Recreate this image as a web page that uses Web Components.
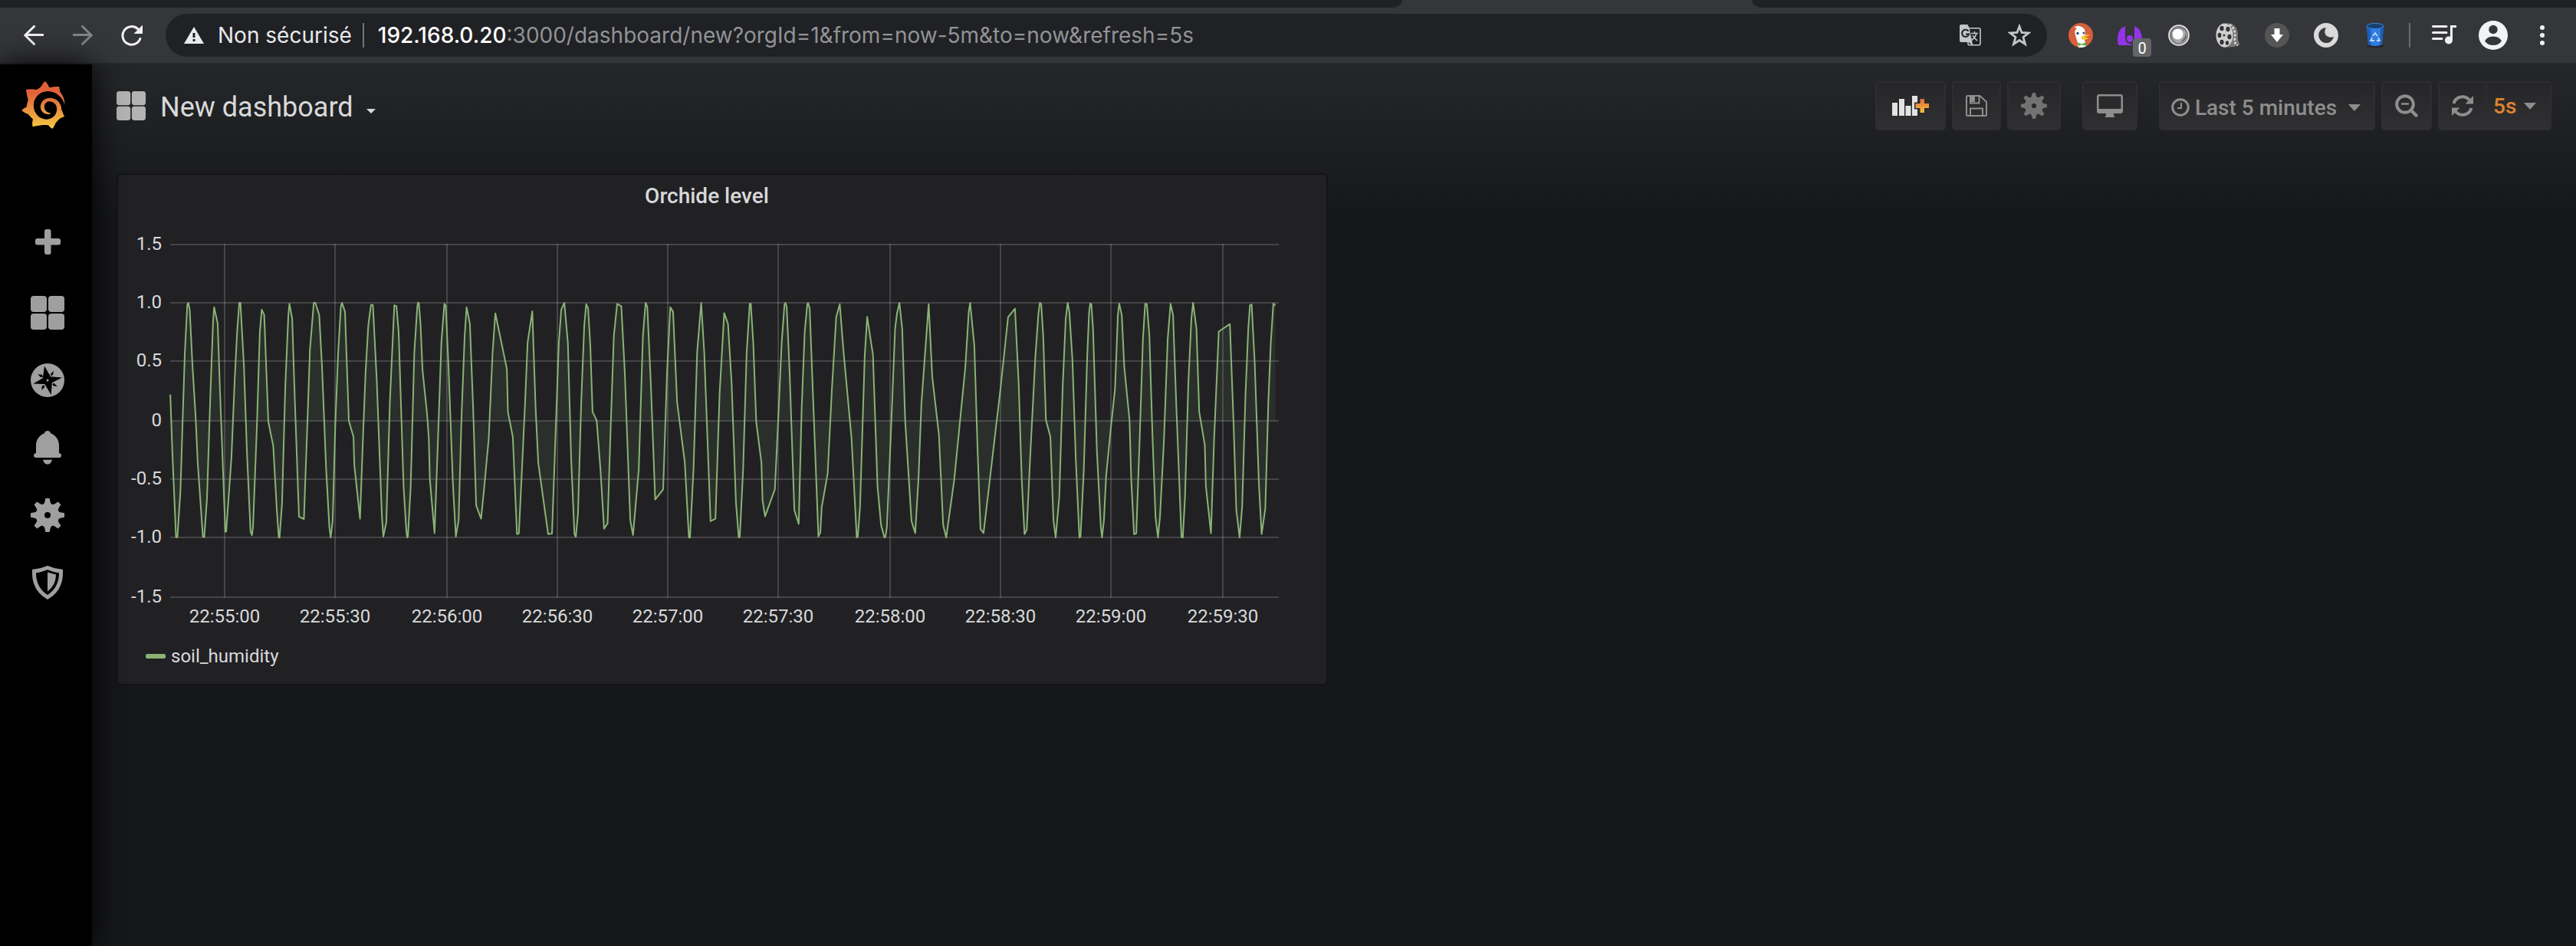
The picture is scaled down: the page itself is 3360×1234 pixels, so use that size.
<!DOCTYPE html>
<html lang="fr">
<head>
<meta charset="utf-8">
<title>New dashboard - Grafana</title>
<style>
  html, body { margin: 0; background: #161719; }
  body { font-family: Roboto, "Liberation Sans", sans-serif; color: #d8d9da; }
</style>
</head>
<body>
<app-window></app-window>
<script>
const gearTeeth = (() => {
  let out = '';
  for (let i = 0; i < 8; i++) out += `<path transform="rotate(${i * 45} 22 22)" d="M15.5 8.500Q18 7.500 18.600 4L19.300 0H24.700L25.400 4Q26 7.500 28.500 8.500V14H15.500Z"/>`;
  return out;
})();
const gear = `<defs><mask id="hub"><rect width="44" height="44" fill="#fff"/><circle cx="22" cy="22" r="4" fill="#000"/></mask></defs><g fill="currentColor" mask="url(#hub)">${gearTeeth}<circle cx="22" cy="22" r="15"/></g>`;
const tiles = '<g fill="currentColor"><rect width="21" height="21" rx="4"/><rect x="23" width="21" height="21" rx="4"/><rect y="23" width="21" height="21" rx="4"/><rect x="23" y="23" width="21" height="21" rx="4"/></g>';

/* Each entry: viewBox size and drawing */
const ICONS = {
  back: [26, 26, '<path d="M25 12.500H2M13.500 1.500L1.800 13L13.500 24.500" fill="none" stroke="#f1f1f2" stroke-width="3" stroke-linecap="round"/>'],
  forward: [26, 26, '<path d="M1 12.500H24M12.500 1.500L24.200 13L12.500 24.500" fill="none" stroke="#838487" stroke-width="3" stroke-linecap="round"/>'],
  reload: [28, 28, '<path d="M24.800 18.500A11.800 11.800 0 1 1 21.500 5.500" fill="none" stroke="#f1f1f2" stroke-width="3" stroke-linecap="round"/><path d="M28 .5V12H16.500Z" fill="#f1f1f2"/>'],
  warning: [26, 22, '<path d="M13 0L26 22H0Z" fill="#e8eaed"/><path d="M11.500 8h3v6h-3zM11.500 16h3v3h-3z" fill="#202124"/>'],
  translate: [28, 28, '<rect x="11" y="4.800" width="16" height="22" rx="2" fill="none" stroke="#c4c5c6" stroke-width="1.600"/><path d="M2 0H10.500L12.500 4L17.500 28L12 23H2Q0 23 0 21V2Q0 0 2 0Z" fill="#c4c5c6"/><path d="M11.600 8.800A4.600 4.600 0 1 0 12.200 12.500H8" fill="none" stroke="#202124" stroke-width="2"/><path d="M15 11.500H24M19.500 9V11.500M22 11.500Q20.500 17 15.500 20.500M17 14Q19 18 23 21" fill="none" stroke="#c4c5c6" stroke-width="1.600"/>'],
  star: [30, 30, '<path d="M15 3.500L18 11.500L27 12L20 17.500L22.500 26.500L15 21.500L7.500 26.500L10 17.500L3 12L12 11.500Z" fill="none" stroke="#c4c5c6" stroke-width="2.800"/>'],
  duck: [32, 32, '<defs><clipPath id="c"><circle cx="16" cy="16" r="16"/></clipPath></defs><g clip-path="url(#c)"><rect width="32" height="32" fill="#d65f3d"/><path d="M8 6Q10 3 14 4Q21 5 22 12L21 22L24 32H13Q12 24 9 16Q7 10 11 7Z" fill="#fff"/><path d="M17 18Q22 14 28 16Q24 18 21 18Q25 20 27 20Q22 23 17 21Z" fill="#f6c630"/><path d="M12 25L17 27.500L23 25V30L17 28.500L13 30Z" fill="#5fb34a"/><circle cx="12" cy="13.500" r="1.700" fill="#2c4f86"/><circle cx="20" cy="13" r="1.500" fill="#2c4f86"/></g>'],
  purple: [32, 25, '<path d="M10 0V15Q10 22 16 23L20 25H2Q0 25 0 17Q0 4 10 0ZM22 0Q32 4 32 18Q32 25 30 25L20 22Q22 20 22 15Z" fill="#9333ea"/><path d="M16 12Q20 12 20 16Q20 21 16 21Q12 21 12 16Q12 12 16 12Z" fill="#9333ea"/>'],
  lens: [28, 28, '<circle cx="14" cy="14" r="13" fill="#808080" stroke="#efefef" stroke-width="1.600"/><circle cx="15" cy="15" r="9.500" fill="#a8a8a8"/><path d="M19 20Q23 17 22 11L24 16Q22 22 16 24Z" fill="#666"/><circle cx="12.500" cy="12.500" r="7" fill="#fff"/>'],
  film: [32, 32, '<path d="M14 0Q27 0 29 13Q28 24 32 28L24 31L10 32Z" fill="#777"/><path d="M18 2Q27 8 25 20Q24 28 29 29" stroke="#ddd" stroke-width="2.500" fill="none" stroke-dasharray="3 2"/><ellipse cx="11.500" cy="16" rx="11" ry="15.500" fill="#cfcfcf"/><g fill="#333"><ellipse cx="8" cy="7" rx="2.600" ry="3.200"/><ellipse cx="16" cy="8" rx="2.600" ry="3.200"/><ellipse cx="5" cy="16" rx="2.400" ry="3.200"/><ellipse cx="18" cy="18" rx="2.600" ry="3.200"/><ellipse cx="8" cy="25" rx="2.600" ry="3.200"/><ellipse cx="15" cy="26" rx="2.200" ry="2.800"/><circle cx="11" cy="16" r="1.500"/></g>'],
  download: [32, 32, '<circle cx="16" cy="16" r="16" fill="#555"/><path d="M12.500 7H19.500V15H24L16 25L8 15H12.500Z" fill="#fff"/>'],
  moon: [32, 32, '<circle cx="16" cy="16" r="16" fill="#dadada"/><path d="M16 6Q12 13 17 17Q21 20 26 18A10 10 0 1 1 16 6Z" fill="#3a3a3c"/>'],
  bin: [26, 32, '<ellipse cx="13" cy="30" rx="12" ry="1.800" fill="#242528"/><path d="M2 4L4 28Q13 32 22 28L24 4Z" fill="#2f7de0"/><path d="M2 4L4 28Q6 29 8 29.500L7 5ZM24 4L22 28L19 29L20 5Z" fill="#1c5fba"/><ellipse cx="13" cy="4" rx="11" ry="3.500" fill="#17406f" stroke="#3b88e2"/><path d="M10 17L13 13L16 17M17 19L19 23H15M12 23H7L9 19" fill="none" stroke="#b9d7fa" stroke-width="1.800"/>'],
  playlist: [32, 26, '<path d="M1.500 1.500H19M1.500 9.500H19M1.500 17.500H13" stroke="#f1f1f2" stroke-width="3" stroke-linecap="round"/><circle cx="22" cy="19.500" r="5" fill="#f1f1f2"/><path d="M25.500 19V1.500H32" fill="none" stroke="#f1f1f2" stroke-width="3"/>'],
  avatar: [38, 38, '<circle cx="19" cy="19" r="19" fill="#f1f3f4"/><circle cx="19" cy="11.500" r="5.700" fill="#35363a"/><path d="M8 26.500Q11 20.500 19 20.500T30 26.500Q26 32 19 32T8 26.500Z" fill="#35363a"/>'],
  dots: [6, 26, '<g fill="#f1f1f2"><circle cx="3" cy="3" r="3"/><circle cx="3" cy="13" r="3"/><circle cx="3" cy="23" r="3"/></g>'],
  tiles: [44, 44, tiles],
  tilesSmall: [38, 38, `<g transform="scale(.8636)" style="color:#b3b3b3">${tiles}</g>`],
  plus: [44, 44, '<path d="M18 4Q18 1 21 1H24Q26.500 1 26.500 4V13H36Q39 13 39 15.500V19Q39 21.500 36 21.500H26.500V31Q26.500 34 24 34H21Q18 34 18 31V21.500H9Q6 21.500 6 19V15.500Q6 13 9 13H18Z" fill="currentColor"/>'],
  compass: [44, 44, '<circle cx="22" cy="22" r="22" fill="currentColor"/><g transform="translate(22 22)" fill="#000"><path d="M-4 -18.500L4 -4.800L19 -3.500L5.800 3.200L4.700 19L-3.800 5L-18.700 4.600L-6.200 -2.800Z"/><path d="M7.800 -12.200L7.300 -7.500L4.800 -5.800L3.900 -8ZM-12.600 -7.700L-7.200 -7.300L-5.800 -4.700L-8.500 -3.600ZM-7.700 13L-7.300 7.800L-4.800 6.300L-3.500 8.500ZM12.800 8L7.800 7.600L6.300 5L8.300 3.800Z"/></g><circle cx="22" cy="22" r="1.500" fill="currentColor"/>'],
  bell: [44, 44, '<path d="M22 0Q25.500 0 26 3.200C33 5.500 37 12 37 19V29Q40 29.500 40 32Q40 35 37 35H7Q4 35 4 32Q4 29.500 7 29V19C7 12 11 5.500 18 3.200Q18.500 0 22 0ZM16 37.800H28Q26.500 43.700 22 43.700T16 37.800Z" fill="currentColor"/>'],
  gear: [44, 44, gear],
  gearSmall: [34, 34, `<g transform="scale(.7727)">${gear}</g>`],
  shield: [44, 44, '<path d="M22 2.500Q31 6.500 39.500 7C40 22 34 34 22 41C10 34 4 22 4.500 7Q13 6.500 22 2.500Z" fill="none" stroke="currentColor" stroke-width="5"/><path d="M22 8.500L33 11.500Q33 25 22 33.500Z" fill="currentColor"/>'],
  caretTitle: [12, 6, '<path d="M0 0H12L6 6Z" fill="#d8d9da"/>'],
  caret: [16, 9, '<path d="M0 0H16L8 9Z" fill="#8e8e8e"/>'],
  addPanel: [48, 26, '<defs><linearGradient id="g" x2="0" y2="1"><stop stop-color="#e0683f"/><stop offset="1" stop-color="#f4c33c"/></linearGradient></defs><path d="M0 9H7V26H0ZM9 4H16V26H9ZM17.500 13H24.500V26H17.500ZM26 0H33V26H26Z" fill="#e3e3e3"/><path d="M34.500 2H43.500V8.500H48V17.500H43.500V24H34.500V17.500H29V8.500H34.500Z" fill="#2a2a2c"/><path d="M36.500 4H42V10H48V16H42V22H36.500V16H30.500V10H36.500Z" fill="url(#g)"/>'],
  save: [28, 28, '<path d="M2.500 1H18.500L27 9V25.500Q27 27 25.500 27H2.500Q1 27 1 25.500V2.500Q1 1 2.500 1ZM6 27V17.500H22V27M6 1V10.500H17.500V1" fill="none" stroke="#8e8e8e" stroke-width="2"/><path d="M6 1H12V9H6Z" fill="#8e8e8e"/>'],
  monitor: [34, 30, '<path d="M3 0H31Q34 0 34 3V22Q34 25 31 25H22V27.500L23.500 30H10.500L12 27.500V25H3Q0 25 0 22V3Q0 0 3 0ZM3.500 2.500Q2.500 2.500 2.500 3.500V19H31.500V3.500Q31.500 2.500 30.500 2.500Z" fill="#8e8e8e" fill-rule="evenodd"/>'],
  clock: [24, 24, '<circle cx="12" cy="12" r="10.300" fill="none" stroke="#8e8e8e" stroke-width="3"/><path d="M13 6V13H8" fill="none" stroke="#8e8e8e" stroke-width="2"/>'],
  zoomOut: [30, 30, '<circle cx="13" cy="13" r="10.800" fill="none" stroke="#8e8e8e" stroke-width="4"/><path d="M8 12.500H18" stroke="#8e8e8e" stroke-width="2.500"/><path d="M21 21L27.500 27.500" stroke="#8e8e8e" stroke-width="4.500" stroke-linecap="round"/>'],
  refresh: [28, 28, '<path d="M2.500 11A11.800 11.800 0 0 1 23 6.500M25.500 17A11.800 11.800 0 0 1 5 21.500" fill="none" stroke="#8e8e8e" stroke-width="4"/><path d="M28 1V11.500H17.500ZM0 27V16.500H10.500Z" fill="#8e8e8e"/>'],
  grafana: [170, 186, '<defs><linearGradient id="s" x1="0" y1="0" x2="0" y2="1"><stop offset=".25" stop-color="#e2613a"/><stop offset=".6" stop-color="#ea9040"/><stop offset="1" stop-color="#f6ca42"/></linearGradient></defs><g transform="translate(-84 -318)"><path d="M176 318Q184 324 193 343Q212 338 231 339Q232 349 235 360Q252 380 253 408L240 428L244 435Q246 447 252 456Q236 461 230 467Q214 483 214 488L206 503Q196 502 189 490Q177 488 168 489Q146 492 127 496Q124 484 128 466Q116 455 110 447Q94 442 84 432Q91 425 104 418Q104 406 110 391Q104 372 101 351Q122 346 142 351Q158 344 162 336Q168 323 176 318Z" fill="url(#s)"/><path d="M253 410C246 383 220 357 187 357C155 357 131 382 131 412C131 445 155 468 183 467C207 466 222 448 222 427C222 408 208 397 193 397C180 397 172 409 173 420C174 434 186 442 200 443C196 447 188 448 182 446C165 442 157 430 158 415C160 396 175 383 195 383C220 383 240 402 240 428L246 440L262 430Z" fill="#000"/></g>']
};

/* The setup callback fills in the shadow content before it is attached */
function define(name, css, html, setup) {
  const tpl = document.createElement('template');
  tpl.innerHTML = `<style>*{box-sizing:border-box}button,input,select{font:inherit;color:inherit;background:none;border:0;padding:0;margin:0}${css}</style>${html}`;
  customElements.define(name, class extends HTMLElement {
    connectedCallback() {
      if (this.shadowRoot) return;
      const content = tpl.content.cloneNode(true);
      if (setup) setup(content, this);
      this.attachShadow({ mode: 'open' }).append(content);
    }
  });
}

define('ui-icon', ':host{display:block;flex:none}svg{display:block}', '<svg aria-hidden="true"></svg>', (root, el) => {
  const [w, h, art] = ICONS[el.getAttribute('name')];
  const svg = root.querySelector('svg');
  const width = +(el.getAttribute('width') || w);
  svg.setAttribute('viewBox', `0 0 ${w} ${h}`);
  svg.setAttribute('width', width);
  svg.setAttribute('height', Math.round(h * width / w));
  svg.innerHTML = art;
});

/* ---------- browser chrome ---------- */
define('icon-button', `
  :host{display:block;flex:none;width:64px}
  button{position:relative;display:flex;align-items:center;justify-content:center;width:100%;height:56px}
  .badge{position:absolute;right:4px;bottom:0;width:24px;height:24px;border-radius:4px;background:#646567;color:#fff;font-size:20px;line-height:26px;text-align:center}
`, '<button type="button"><ui-icon></ui-icon></button>', (root, el) => {
  const b = root.querySelector('button');
  b.setAttribute('aria-label', el.getAttribute('label'));
  b.firstChild.setAttribute('name', el.getAttribute('icon'));
  if (el.hasAttribute('badge')) {
    const s = document.createElement('span');
    s.className = 'badge';
    s.textContent = el.getAttribute('badge');
    b.append(s);
  }
});

define('tab-strip', `
  :host{display:flex;height:10px;background:#35363a}
  i{display:block;background:#202124;height:10px}
  .before{flex:0 1 1829px;border-bottom-right-radius:14px 10px}
  .tab{flex:0 1 456px;background:none}
  .after{flex:1;border-bottom-left-radius:14px 10px}
`, '<i class="before"></i><i class="tab"></i><i class="after"></i>');

define('address-bar', `
  :host{display:flex;align-items:center;flex:1;min-width:0;height:56px;border-radius:28px;background:#202124;padding:0 4px 0 24px;font-family:Inter,Roboto,sans-serif;font-size:28px;line-height:36px}
  .site{display:flex;align-items:center;gap:18px;color:#e8eaed}
  .bar{width:2px;height:32px;background:#75767a;margin:0 18px 0 14px}
  .url{display:flex;flex:1;min-width:0}
  input{field-sizing:content;outline:0;height:36px}
  .host{color:#fff;font-weight:500}
  .path{color:#929396}
`, `<button class="site" type="button"><ui-icon name="warning"></ui-icon><span>Non sécurisé</span></button>
  <span class="bar"></span>
  <div class="url"><input class="host" aria-label="Host" value="192.168.0.20"><input class="path" aria-label="Path" value=":3000/dashboard/new?orgId=1&amp;from=now-5m&amp;to=now&amp;refresh=5s"></div>
  <icon-button icon="translate" label="Traduire cette page"></icon-button>
  <icon-button icon="star" label="Ajouter aux favoris"></icon-button>`);

define('browser-toolbar', `
  :host{display:flex;align-items:center;height:72px;padding:0 12px;background:#35363a}
  .group{display:flex}
  address-bar{margin:0 12px}
  .bar{width:2px;height:32px;background:#6b6c6f;margin:0 12px}
`, `<div class="group">
    <icon-button icon="back" label="Retour"></icon-button>
    <icon-button icon="forward" label="Avancer"></icon-button>
    <icon-button icon="reload" label="Actualiser"></icon-button>
  </div>
  <address-bar></address-bar>
  <div class="group">
    <icon-button icon="duck" label="DuckDuckGo"></icon-button>
    <icon-button icon="purple" label="Extension" badge="0"></icon-button>
    <icon-button icon="lens" label="Extension"></icon-button>
    <icon-button icon="film" label="Extension"></icon-button>
    <icon-button icon="download" label="Extension"></icon-button>
    <icon-button icon="moon" label="Extension"></icon-button>
    <icon-button icon="bin" label="Extension"></icon-button>
  </div>
  <span class="bar"></span>
  <div class="group">
    <icon-button icon="playlist" label="Multimédia"></icon-button>
    <icon-button icon="avatar" label="Profil"></icon-button>
    <icon-button icon="dots" label="Menu"></icon-button>
  </div>`);

/* ---------- Grafana ---------- */
define('side-menu', `
  :host{display:block;flex:none;width:120px;background:#000;box-shadow:0 0 40px #000;color:#9f9f9f;position:relative}
  .logo{display:block;padding:22px 0 0 28px;height:192px}
  nav{display:flex;flex-direction:column}
  nav a{display:flex;align-items:center;justify-content:center;height:88px;padding-left:4px;color:inherit}
`, `<a class="logo" href="#" aria-label="Grafana"><ui-icon name="grafana" width="57"></ui-icon></a>
  <nav>
    <a href="#" aria-label="Create"><ui-icon name="plus"></ui-icon></a>
    <a href="#" aria-label="Dashboards"><ui-icon name="tiles"></ui-icon></a>
    <a href="#" aria-label="Explore"><ui-icon name="compass"></ui-icon></a>
    <a href="#" aria-label="Alerting"><ui-icon name="bell"></ui-icon></a>
    <a href="#" aria-label="Configuration"><ui-icon name="gear"></ui-icon></a>
    <a href="#" aria-label="Server admin"><ui-icon name="shield"></ui-icon></a>
  </nav>`);

define('nav-button', `
  :host{display:block;flex:none;width:var(--w,auto)}
  button{display:flex;align-items:center;justify-content:center;gap:7px;width:100%;height:64px;padding-top:var(--drop,0);border:2px solid #2e2e30;border-radius:5px;background:linear-gradient(#262628,#303032);color:#8e8e8e;font-size:28px;font-weight:500}
`, '<button type="button"><slot></slot></button>', (root, el) => {
  if (el.hasAttribute('label')) root.querySelector('button').setAttribute('aria-label', el.getAttribute('label'));
});

define('refresh-picker', `
  :host{display:flex;flex:none;width:148px;height:64px;border:2px solid #2e2e30;border-radius:5px;background:linear-gradient(#262628,#303032);font-size:28px;font-weight:500}
  button{display:flex;align-items:center;justify-content:center;width:62px;border-right:2px solid #2e2e30}
  label{display:flex;align-items:center;flex:1;gap:10px;padding-left:8px}
  select{appearance:none;color:#e0832f;outline:0;field-sizing:content}
`, `<button type="button" aria-label="Refresh"><ui-icon name="refresh"></ui-icon></button>
  <label><select aria-label="Refresh interval"><option>5s</option></select><ui-icon name="caret"></ui-icon></label>`);

define('dashboard-navbar', `
  :host{display:flex;align-items:center;height:108px;padding:0 32px}
  .title{display:flex;align-items:center;color:#d8d9da;font-size:36px;line-height:48px}
  .title span{margin:0 17px 0 19px;padding-top:4px}
  .title .down{padding-top:14px}
  .tools{display:flex;gap:8px;margin-left:auto}
  .group{display:flex;gap:8px}
  .group + .group{margin-left:20px}
  .wide{--w:92px}.save{--w:64px}.set{--w:70px}.tv{--w:72px}.time{--w:282px;--drop:4px}.zoom{--w:66px}
  .time ui-icon:last-child{margin:0 3px 0 8px}
`, `<button class="title" type="button"><ui-icon name="tilesSmall"></ui-icon><span>New dashboard</span><ui-icon class="down" name="caretTitle"></ui-icon></button>
  <div class="tools">
    <div class="group">
      <nav-button class="wide" label="Add panel"><ui-icon name="addPanel"></ui-icon></nav-button>
      <nav-button class="save" label="Save dashboard"><ui-icon name="save"></ui-icon></nav-button>
      <nav-button class="set" label="Dashboard settings"><ui-icon name="gearSmall" style="color:#727272"></ui-icon></nav-button>
    </div>
    <div class="group"><nav-button class="tv" label="Cycle view mode"><ui-icon name="monitor"></ui-icon></nav-button></div>
    <div class="group">
      <nav-button class="time"><ui-icon name="clock"></ui-icon><span>Last 5 minutes</span><ui-icon name="caret"></ui-icon></nav-button>
      <nav-button class="zoom" label="Zoom out"><ui-icon name="zoomOut"></ui-icon></nav-button>
      <refresh-picker></refresh-picker>
    </div>
  </div>`);

/* Samples of soil_humidity, in three batches: plot offset, horizontal units per pixel, then x,y pairs
   where y = 759 is a value of 0 and each unit of humidity spans 343. */
const BATCHES = [
  [-14, 2.8, '230,682 238,860 251,1099 256,1099 267,962 275,759 283,560 292,420 296,414 301,435 311,600 322,740 330,880 349,1097 354,1099 364,985 376,690 386,470 390,427 403,474 412,680 431,1083 434,1083 453,870 465,640 474,500 482,414 486,414 499,600 510,850 523,1083 528,1093 532,1070 546,780 557,500 564,434 573,449 588,762 606,832 619,1020 626,1100 629,1100 638,1000 650,660 661,450 665,417 675,460 685,700 700,1039 718,1046 729,800 740,550 754,414 760,414 774,450 784,600 799,900 811,1070 816,1100 823,1050 833,760 843,560 853,425 857,414 868,440 882,759 899,806 902,887 923,1045 934,800 943,620 953,480 963,420 970,420 984,640 1003,1040 1008,1097 1019,1055 1032,700 1042,530 1048,421 1056,424 1064,500 1082,950 1092,1080 1095,1100 1098,1097 1108,950 1121,560 1132,425 1135,413 1138,416 1144,480 1151,610 1168,740 1174,810 1178,930 1195,1087 1206,850 1220,530 1231,417 1236,422 1246,600 1262,940 1273,1097 1283,1050 1294,740 1305,510 1312,427 1324,475 1336,720 1347,1006 1365,1045 1375,965 1393,810 1407,560 1417,445'],
  [506, 2.8, '3,607 7,733 25,806 40,1090 47,1088 62,840 70,700 79,530 96,439 108,720 118,882 154,1090 168,1088 181,800 193,530 202,434 213,414 226,530 238,870 250,1090 255,1098 263,1030 275,700 286,480 293,418 300,430 308,540 316,733 331,757 345,900 358,1074 371,1059 383,760 394,510 406,417 421,424 434,620 454,1050 464,1093 485,900 500,510 510,414 516,425 529,650 545,989 574,959 588,620 600,427 610,440 625,705 653,880 668,1100 672,1100 685,900 698,560 713,414 724,560 747,1052 765,1045 780,680 797,444 811,476 824,650 840,1000 850,1100 854,1097 866,900 879,560 890,417 894,417 903,530 914,762 933,882 937,990 946,1038 982,959 995,740 1007,530 1017,420 1020,414 1025,425 1036,620 1053,1020 1069,1060 1080,720 1091,500 1100,420 1103,414 1109,430 1122,700 1141,1097 1148,1085 1153,1012 1175,912 1190,670 1206,456 1219,418 1232,550 1262,810 1281,1100 1285,1097 1293,1010 1310,570 1319,455 1340,565 1357,950 1370,1065 1382,1100 1386,1097 1391,1070 1404,830 1421,490 1428,445 1437,414 1447,490 1458,760 1481,1052'],
  [1026, 2.751, '38,1087 50,920 60,710 86,418 99,630 123,800 138,1063 149,1100 178,930 218,600 230,440 235,414 250,540 262,850 272,1075 283,1087 310,900 344,665 371,456 396,431 409,650 420,930 430,1090 438,1078 450,870 469,570 480,445 485,414 490,418 497,510 507,757 523,806 534,1050 542,1100 555,980 567,660 578,460 585,414 591,440 602,580 614,870 627,1100 631,1097 643,900 655,570 662,440 666,416 670,418 676,490 690,850 704,1070 708,1100 715,1050 723,920 740,778 755,665 765,450 770,416 779,450 788,600 807,757 813,930 823,1090 831,1088 843,820 855,520 863,417 869,418 878,510 889,800 900,1040 909,1100 916,1040 930,820 944,520 954,417 963,450 975,720 993,1098 998,1100 1006,980 1018,650 1029,460 1035,414 1047,490 1057,733 1077,830 1081,950 1099,1087 1110,820 1127,498 1167,476 1180,760 1190,1020 1202,1100 1211,1010 1223,680 1233,490 1239,421 1245,419 1256,590 1271,940 1281,1090 1294,1015 1305,700 1314,530 1323,416 1330,422']
];

define('time-series', `
  :host{display:block}
  svg{display:block;width:100%;height:auto}
  text{font-size:24px;fill:#d8d9da}
`, '<svg viewBox="0 0 1576 528" role="img" aria-label="soil_humidity over the last 5 minutes"></svg>', root => {
  const left = 68, right = 1514, zero = 249;
  let art = '';
  [['1.5', 19], ['1.0', 95], ['0.5', 171], ['0', 249], ['-0.5', 325], ['-1.0', 401], ['-1.5', 479]].forEach(([label, y]) => {
    art += `<path d="M${left} ${y}H${right}" stroke="#c8c8c8" stroke-opacity=".22" stroke-width="2"/><text x="57" y="${y + 7}" text-anchor="end">${label}</text>`;
  });
  ['22:55:00', '22:55:30', '22:56:00', '22:56:30', '22:57:00', '22:57:30', '22:58:00', '22:58:30', '22:59:00', '22:59:30'].forEach((label, i) => {
    const x = [139, 283, 429, 573, 717, 861, 1007, 1151, 1295, 1441][i];
    art += `<path d="M${x} 18V480" stroke="#c8c8c8" stroke-opacity=".22" stroke-width="2"/><text x="${x}" y="512" text-anchor="middle">${label}</text>`;
  });
  const pts = BATCHES.flatMap(([offset, scale, data]) => data.split(' ').map(p => {
    const [x, y] = p.split(',').map(Number);
    return [(offset + x / scale).toFixed(1), (zero + (y - 759) / 2.24).toFixed(1)];
  }));
  const line = pts.map(p => p.join(' ')).join('L');
  art += `<path d="M${pts[0][0]} ${zero}L${line}L${pts[pts.length - 1][0]} ${zero}Z" fill="#7eb26d" fill-opacity=".1"/>`;
  art += `<path d="M${line}" fill="none" stroke="#8ab375" stroke-width="2" stroke-linejoin="round"/>`;
  root.querySelector('svg').innerHTML = art;
});

define('graph-panel', `
  :host{display:block;background:#212124;border:2px solid #141414;border-radius:6px;padding-bottom:20px}
  h2{margin:0;padding:8px 40px 0 0;height:72px;font-size:28px;line-height:40px;font-weight:500;text-align:center}
  .legend{display:flex;align-items:center;padding:12px 0 0 36px;height:44px}
  button{display:flex;align-items:center;gap:7px;font-size:24px;line-height:32px;color:#d8d9da}
  i{width:26px;height:6px;border-radius:2px;background:#8ab375}
`, `<h2><slot name="title"></slot></h2>
  <slot></slot>
  <div class="legend"><button type="button"><i></i><slot name="legend"></slot></button></div>`);

define('dashboard-page', `
  :host{display:flex;flex-direction:column;flex:1;min-width:0;background:linear-gradient(#242527 20px,#161719 200px)}
  .grid{display:grid;grid-template-columns:1fr 1fr;gap:16px;padding:34px 32px}
`, `<dashboard-navbar></dashboard-navbar>
  <main class="grid">
    <graph-panel><span slot="title">Orchide level</span><time-series></time-series><span slot="legend">soil_humidity</span></graph-panel>
  </main>`);

define('app-window', `
  :host{display:flex;flex-direction:column;min-height:100vh}
  .page{display:flex;flex:1;border-top:2px solid #28292b}
`, `<tab-strip></tab-strip>
  <browser-toolbar></browser-toolbar>
  <div class="page"><side-menu></side-menu><dashboard-page></dashboard-page></div>`);
</script>
</body>
</html>
